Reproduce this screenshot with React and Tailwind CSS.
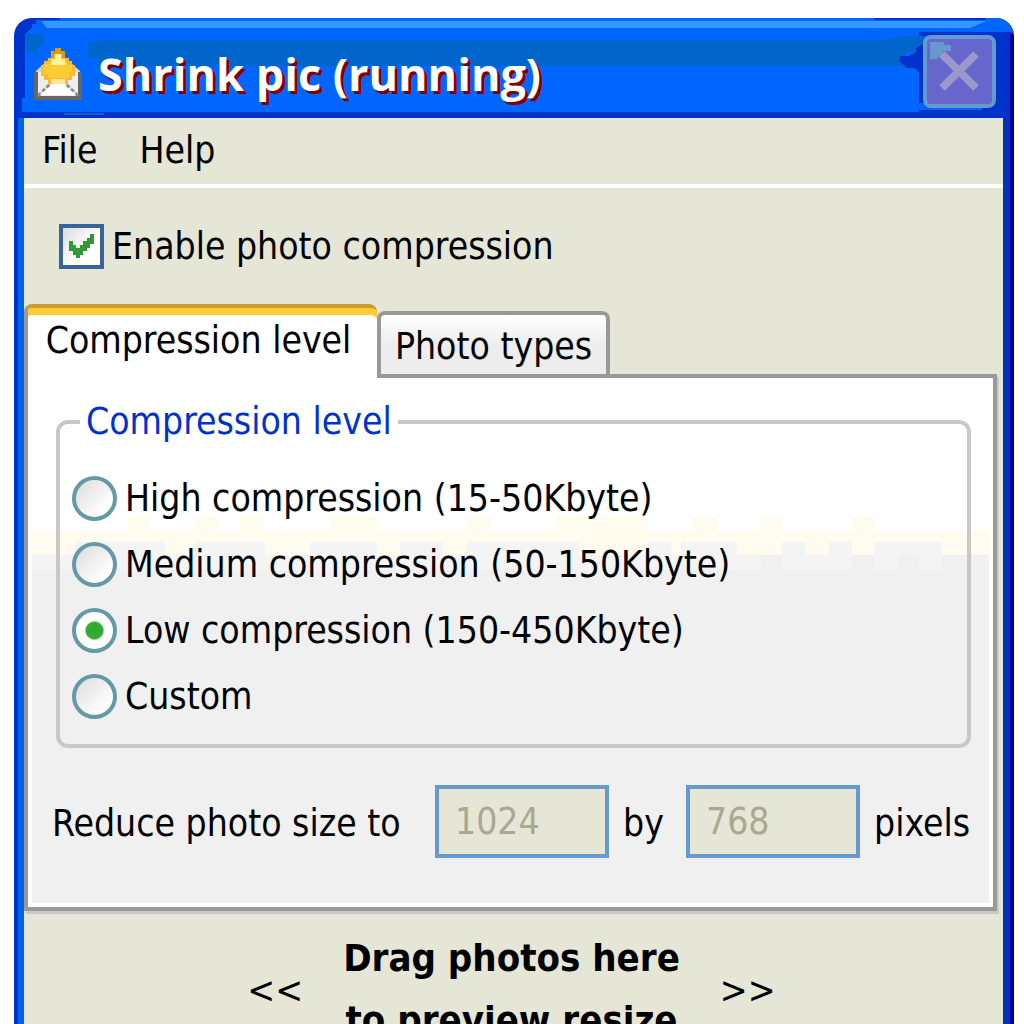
import { useState } from 'react';

const levels = [
    { id: 'high', label: 'High compression (15-50Kbyte)' },
    { id: 'medium', label: 'Medium compression (50-150Kbyte)' },
    { id: 'low', label: 'Low compression (150-450Kbyte)' },
    { id: 'custom', label: 'Custom' },
];

const TitleBackdrop = () => (
    <svg className="absolute inset-0 w-full h-full" viewBox="0 0 1000 100" preserveAspectRatio="none" shapeRendering="crispEdges" aria-hidden="true">
        <rect width="1000" height="100" fill="#0033cc" />
        <path d="M18 0H1000V14H905V94H8V80H11V16L18 10Z" fill="#0066ff" />
        <path d="M28 3H972L956 10H32Z" fill="#3399ff" />
        <path d="M18 0H46V2H22V6H18ZM860 0H972V2H860Z" fill="#0033cc" />
        <path d="M12 16H30V28H24V34H12Z" fill="#0066cc" />
        <path d="M92 22H870L890 18H912V34H892V48H84V40H74V24Z" fill="#0066cc" />
        <path d="M912 24V54H904L900 50H892L886 44V38H894L902 34V30Z" fill="#0033cc" />
        <path d="M905 85H968V92H905Z" fill="#0066ff" />
        <path d="M968 76H973V86H968Z" fill="#0066ff" />
        <path d="M50 95H90V97H50Z" fill="#0066cc" />
        <path d="M996 16H1000V100H996Z" fill="#000099" />
    </svg>
);

const AppIcon = () => (
    <svg className="w-12 h-[54px]" viewBox="0 0 48 54" aria-hidden="true">
        <path d="M2 24L24 4L46 24V50H2Z" fill="#d8d4c8" />
        <path d="M2 25V51H46V25" fill="#ededf0" stroke="#666666" strokeWidth="4" />
        <path d="M4 49L18 35M44 49L30 35" stroke="#8c8c90" strokeWidth="3" strokeDasharray="4 2" />
        <path d="M6 48L20 36H28L42 48Z" fill="#ffffff" />
        <path d="M21 1H27V4H31V11H35V14H38V18H41V29H38V33H34V37H14V33H10V29H7V18H10V14H14V11H17V4H21Z" fill="#ffb92e" />
        <path d="M10 17H16V14H33V17H38V25H35V31H14V27H10Z" fill="#ffcc33" />
        <path d="M18 4H21V1H27V4H31V11H28V7H20V11H17Z" fill="#d99a0c" />
        <path d="M21 7H27V12H31V18H17V12H21Z" fill="#fff3a0" />
        <path d="M17 32H31V37H17Z" fill="#ffe699" />
    </svg>
);

// Uneven pale yellow strip where the panel turns from white to grey
const PanelBackdrop = () => (
    <svg className="absolute left-0 top-[138px] w-full h-[54px]" viewBox="32 515 958 54" preserveAspectRatio="none" shapeRendering="crispEdges" aria-hidden="true">
        <path d="M32 540H990V569H32Z" fill="#f4f4f5" />
        <path d="M762 554H783V569H762ZM853 554H875V569H853ZM900 554H920V569H900ZM943 554H990V569H943Z" fill="#f0f0f0" />
        <path d="M32 530H990V541H32Z" fill="#fffbee" />
        <path d="M128 515h22v15h-22zM195 515h23v15h-23zM240 515h23v15h-23zM330 515h47v15h-47zM467 515h25v15h-25zM557 515h91v15h-91zM693 515h25v15h-25zM762 515h21v15h-21zM853 515h22v15h-22z" fill="#fffbee" />
        <path d="M32 540h43v14h-43zM165 540h30v14h-30zM265 540h45v14h-45zM377 540h23v14h-23zM443 540h24v14h-24zM580 540h68v14h-68zM672 540h10v14h-10zM738 540h45v14h-45zM807 540h23v14h-23zM853 540h22v14h-22zM943 540h47v14h-47z" fill="#fffbee" />
    </svg>
);

const App = () => {
    const [enabled, setEnabled] = useState(true);
    const [level, setLevel] = useState('low');

    return (
        <div className="h-screen overflow-hidden bg-white pt-[18px] pl-[14px] pr-[10px] font-['DejaVu_Sans_Condensed','DejaVu_Sans',sans-serif] text-[37px] leading-[44px] text-black">
            <header className="relative flex h-[100px] items-center overflow-hidden rounded-t-[18px] pl-5 pr-[18px]">
                <TitleBackdrop />
                <div className="relative flex flex-1 items-center gap-4 pt-3">
                    <AppIcon />
                    <h1 className="whitespace-nowrap font-['Open_Sans',sans-serif] text-[45px] leading-[60px] font-bold text-white [text-shadow:3px_3px_0_#800000]">Shrink pic (running)</h1>
                </div>
                <button type="button" aria-label="Close" className="relative mt-[6px] h-[73px] w-[73px] rounded-[8px] border-4 border-[#6699cc] bg-[#6666cc]">
                    <svg className="h-full w-full" viewBox="0 0 65 65" aria-hidden="true">
                        <path d="M3 3H17V6H24V12H16V18H10V20H3Z" fill="#6699cc" />
                        <path d="M15 15L49 49M49 15L15 49" stroke="#9999cc" strokeWidth="8" />
                    </svg>
                </button>
            </header>

            <div className="border-l-4 border-r-4 border-l-[#0033cc] border-r-[#000099]">
                <div className="border-l-[6px] border-r-[7px] border-l-[#0066e8] border-r-[#0033bb] bg-[#e6e6d6]">
                    <nav className="flex h-[70px] gap-[42px] border-b-4 border-white pl-[18px]">
                        <button type="button">File</button>
                        <button type="button">Help</button>
                    </nav>

                    <label className="ml-[35px] mt-[35px] flex w-fit items-center gap-2">
                        <span className="grid">
                            <input
                                type="checkbox"
                                checked={enabled}
                                onChange={(e) => setEnabled(e.target.checked)}
                                className="peer col-start-1 row-start-1 h-[45px] w-[45px] appearance-none border-4 border-[#3a6499] bg-linear-to-br from-[#dcdcdc] to-white to-60%"
                            />
                            <svg className="invisible peer-checked:visible pointer-events-none col-start-1 row-start-1 h-[45px] w-[45px]" viewBox="0 0 45 45" aria-hidden="true">
                                <path d="M10 17H14V21H17V24H21V21H24V17H28V14H31V10H35V20H31V24H28V27H24V31H21V34H17V31H14V27H10Z" fill="#339933" />
                            </svg>
                        </span>
                        <span className="pt-0.5">Enable photo compression</span>
                    </label>

                    <div className="mt-[35px] pr-[6px]">
                        <div role="tablist" className="relative flex items-end">
                            <button type="button" role="tab" aria-selected="true" className="relative z-10 -mb-1 h-[74px] w-[353px] whitespace-nowrap rounded-t-[8px] border-l-4 border-t-4 border-l-[#999999] border-t-[#cc9933] bg-white pr-2 pb-1 shadow-[inset_0_7px_0_#ffcc33]">
                                Compression level
                            </button>
                            <button type="button" role="tab" aria-selected="false" className="h-[63px] w-[233px] whitespace-nowrap rounded-t-[8px] border-4 border-b-0 border-[#999999] bg-linear-to-b from-white to-[#ededed] to-50% pt-1">
                                Photo types
                            </button>
                        </div>

                        <div role="tabpanel" className="border-4 border-[#999999] shadow-[2px_3px_0_#c8c8c8]">
                            <div className="relative border-4 border-t-0 border-white bg-linear-to-b from-white from-[170px] to-[#f0f0f0] to-[170px] pl-6 pr-[18px] pt-[22px] pb-[45px]">
                                <PanelBackdrop />
                                <fieldset className="relative rounded-[12px] border-4 border-[#c8c8c8] px-3 pb-[26px]">
                                    <legend className="ml-2 px-[6px] text-[#0033cc]">Compression level</legend>
                                    <div className="flex flex-col gap-[22px] pt-8">
                                        {levels.map(({ id, label }) => (
                                            <label key={id} className="flex h-11 items-center gap-2">
                                                <input
                                                    type="radio"
                                                    name="level"
                                                    value={id}
                                                    checked={level === id}
                                                    onChange={() => setLevel(id)}
                                                    className="h-[45px] w-[45px] appearance-none rounded-full border-4 border-[#6699a8] bg-linear-to-br from-[#dcdcdc] to-white to-80% checked:bg-[radial-gradient(circle,#33aa33_0_8px,#ffffff_10px)]"
                                                />
                                                <span className="pt-0.5">{label}</span>
                                            </label>
                                        ))}
                                    </div>
                                </fieldset>

                                <div className="relative -ml-1 mt-[37px] flex items-center whitespace-nowrap">
                                    <span className="w-[383px] pt-1">Reduce photo size to</span>
                                    <input
                                        type="text"
                                        aria-label="Width in pixels"
                                        defaultValue="1024"
                                        disabled
                                        className="h-[73px] w-[174px] border-4 border-[#6699cc] bg-[#e6e6d6] px-4 text-[#aaa890]"
                                    />
                                    <span className="w-[77px] pt-1 pr-2 text-center">by</span>
                                    <input
                                        type="text"
                                        aria-label="Height in pixels"
                                        defaultValue="768"
                                        disabled
                                        className="h-[73px] w-[174px] border-4 border-[#6699cc] bg-[#e6e6d6] px-4 text-[#aaa890]"
                                    />
                                    <span className="pt-1 pl-[14px]">pixels</span>
                                </div>
                            </div>
                        </div>
                    </div>

                    <div className="flex items-center justify-center gap-10 pt-4 pr-1 pb-5">
                        <span className="pt-1">&lt;&lt;</span>
                        <p className="text-center text-[38px] leading-[62px] font-bold">
                            Drag photos here
                            <br />
                            to preview resize
                        </p>
                        <span className="pt-1">&gt;&gt;</span>
                    </div>
                </div>
            </div>
        </div>
    );
};

export default App;
